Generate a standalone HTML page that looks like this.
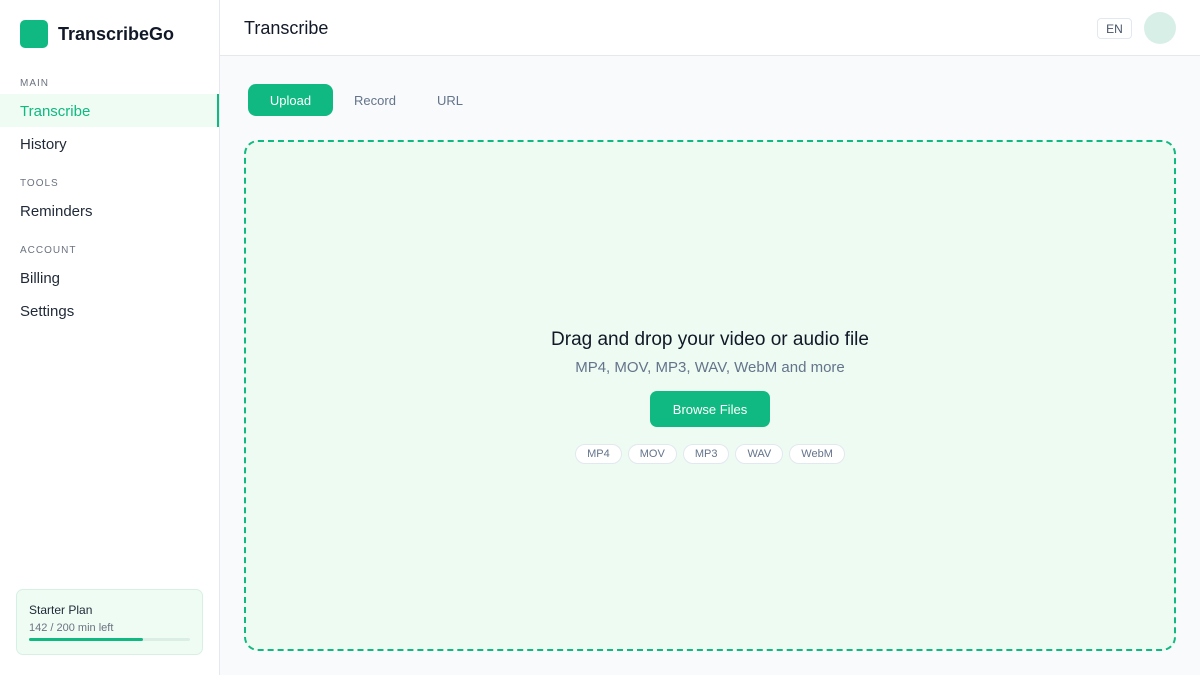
<!DOCTYPE html>
<html><head><style>
*{box-sizing:border-box;margin:0;padding:0}
body{width:1200px;height:675px;font-family:"Liberation Sans",sans-serif;background:#f8fafb;position:relative;overflow:hidden;color:#0f172a}
.sb{position:absolute;left:0;top:0;width:220px;height:675px;background:#fff;border-right:1px solid #e5e9ee}
.logo{position:absolute;left:20px;top:20px;width:28px;height:28px;border-radius:5px;background:#10b981}
.brand{position:absolute;left:58px;top:24px;font-size:18px;font-weight:bold;color:#111827}
.sec{position:absolute;left:20px;font-size:10px;letter-spacing:1px;color:#6b7280}
.it{position:absolute;left:0;width:219px;height:33px;line-height:35px;padding-left:20px;font-size:15px;color:#1f2937}
.it.act{background:#effcf4;color:#10b981;border-right:2px solid #10b981}
.plan{position:absolute;left:16px;top:589px;width:187px;height:66px;border:1px solid #d8f0e4;background:#effcf4;border-radius:7px}
.hd{position:absolute;left:220px;top:0;right:0;height:56px;background:#fff;border-bottom:1px solid #e5e9ee}
.tab{position:absolute;top:84px;height:32px;line-height:33px;font-size:13px;color:#64748b;text-align:center}
.dz{position:absolute;left:244px;top:140px;width:932px;height:511px;border:2px dashed #10b981;border-radius:14px;background:#eefbf2}
.pill{display:inline-block;height:20px;line-height:19px;border:1px solid #e2e8f0;border-radius:10px;background:#fff;font-size:11px;color:#64748b;padding:0 11px;margin:0 3px}
</style></head><body>
<div class="sb">
<div class="logo"></div><div class="brand">TranscribeGo</div>
<div class="sec" style="top:78px">MAIN</div>
<div class="it act" style="top:94px">Transcribe</div>
<div class="it" style="top:127px">History</div>
<div class="sec" style="top:178px">TOOLS</div>
<div class="it" style="top:194px">Reminders</div>
<div class="sec" style="top:245px">ACCOUNT</div>
<div class="it" style="top:261px">Billing</div>
<div class="it" style="top:294px">Settings</div>
<div class="plan">
<div style="position:absolute;left:12px;top:13px;font-size:12px;color:#1f2937">Starter Plan</div>
<div style="position:absolute;left:12px;top:32px;font-size:11px;color:#6b7280">142 / 200 min left</div>
<div style="position:absolute;left:12px;top:48px;width:161px;height:3px;background:#dbeee6;border-radius:2px"><div style="width:114px;height:3px;background:#10b981;border-radius:2px"></div></div>
</div>
</div>
<div class="hd">
<div style="position:absolute;left:24px;top:18px;font-size:18px;color:#111827">Transcribe</div>
<div style="position:absolute;left:877px;top:18px;width:35px;height:21px;border:1px solid #e2e8f0;border-radius:4px;font-size:12px;line-height:20px;text-align:center;color:#475569">EN</div>
<div style="position:absolute;left:924px;top:12px;width:32px;height:32px;border-radius:50%;background:#d8efe8"></div>
</div>
<div class="tab" style="left:248px;width:85px;background:#10b981;color:#fff;border-radius:8px">Upload</div>
<div class="tab" style="left:345px;width:60px">Record</div>
<div class="tab" style="left:430px;width:40px">URL</div>
<div class="dz">
<div style="position:absolute;left:0;right:0;top:187px;text-align:center;font-size:19px;color:#111827">Drag and drop your video or audio file</div>
<div style="position:absolute;left:0;right:0;top:217px;text-align:center;font-size:15px;color:#64748b">MP4, MOV, MP3, WAV, WebM and more</div>
<div style="position:absolute;left:404px;top:249px;width:120px;height:36px;line-height:37px;border-radius:7px;background:#10b981;color:#fff;font-size:13px;text-align:center">Browse Files</div>
<div style="position:absolute;left:0;right:0;top:302px;text-align:center"><span class="pill">MP4</span><span class="pill">MOV</span><span class="pill">MP3</span><span class="pill">WAV</span><span class="pill">WebM</span></div>
</div>
</body></html>
